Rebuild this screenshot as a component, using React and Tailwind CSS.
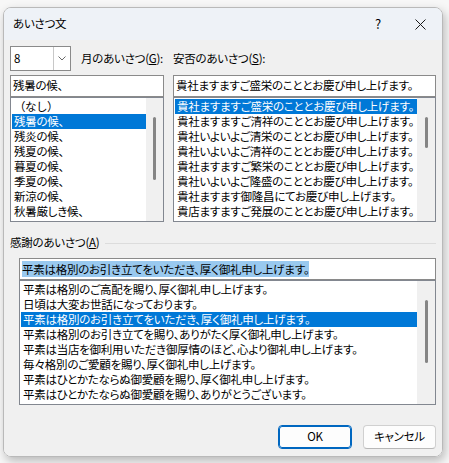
import React from 'react';

const monthItems = [
  <span className="[font-feature-settings:normal] tracking-[-0.5px]">（なし）</span>,
  '残暑の候、', '残炎の候、', '残夏の候、', '暮夏の候、', '季夏の候、', '新涼の候、', '秋暑厳しき候、',
];

const safetyItems = [
  '貴社ますますご盛栄のこととお慶び申し上げます。',
  '貴社ますますご清祥のこととお慶び申し上げます。',
  '貴社いよいよご清栄のこととお慶び申し上げます。',
  '貴社いよいよご清祥のこととお慶び申し上げます。',
  '貴社ますますご繁栄のこととお慶び申し上げます。',
  '貴社いよいよご隆盛のこととお慶び申し上げます。',
  '貴社ますます御隆昌にてお慶び申し上げます。',
  '貴店ますますご発展のこととお慶び申し上げます。',
];

const thanksItems = [
  '平素は格別のご高配を賜り、厚く御礼申し上げます。',
  '日頃は大変お世話になっております。',
  '平素は格別のお引き立てをいただき、厚く御礼申し上げます。',
  '平素は格別のお引き立てを賜り、ありがたく厚く御礼申し上げます。',
  '平素は当店を御利用いただき御厚情のほど、心より御礼申し上げます。',
  '毎々格別のご愛顧を賜り、厚く御礼申し上げます。',
  '平素はひとかたならぬ御愛顧を賜り、厚く御礼申し上げます。',
  '平素はひとかたならぬ御愛顧を賜り、ありがとうございます。',
];

// list box with a fake vertical scrollbar on the right
const ListBox = ({ items, selected, thumbH, trackW = 'w-[18px]' }) => (
  <div className="flex h-[125px] border border-[#828790] bg-white">
    <div className="flex-1 flex flex-col pt-[1px] pl-[1px] overflow-hidden">
      {items.map((item, i) => (
        <div
          key={i}
          className={`h-[15px] leading-[15px] pl-[2px] whitespace-nowrap ${i === selected ? 'bg-[#0078d7] text-white' : 'text-black'}`}
        >
          {item}
        </div>
      ))}
    </div>
    <div className={`${trackW} bg-[#f0f0f0] flex justify-center pt-[19px]`}>
      <div className={`w-[3px] ${thumbH} bg-[#858585] rounded-full`} />
    </div>
  </div>
);

const TextBox = ({ children }) => (
  <div className="h-[22px] border border-[#8a8a8a] bg-white flex items-center pl-[2px] whitespace-nowrap overflow-hidden">
    {children}
  </div>
);

export default function App() {
  return (
    <div className="w-[449px] h-[463px] bg-[#f7f7f7] pl-[3px] pt-[7px] font-['Noto_Sans_CJK_JP',sans-serif] text-[11.5px] tracking-[-0.25px] text-black [font-feature-settings:'palt']">
      <div className="w-[440px] h-[450px] rounded-[8px] border border-[#b9b9b9] overflow-hidden flex flex-col shadow-[2px_4px_10px_rgba(0,0,0,0.25)]">
        {/* title bar */}
        <div className="h-[32px] bg-[#eef2f7] flex items-center pl-[9px] pr-[16px]">
          <span className="flex-1">あいさつ文</span>
          <span className="text-[13px] mr-[34px]">?</span>
          <svg width="11" height="11" viewBox="0 0 11 11">
            <path d="M0.5 0.5 L10.5 10.5 M10.5 0.5 L0.5 10.5" stroke="#1a1a1a" strokeWidth="1" />
          </svg>
        </div>

        {/* body */}
        <div className="flex-1 bg-[#f0f0f0] pt-[6px] pl-[6px] pr-[6px] flex flex-col">
          <div className="flex items-center h-[25px]">
            <div className="w-[61px] h-[25px] border border-[#8a8a8a] bg-white flex">
              <div className="flex-1 flex items-center pl-[3px]">8</div>
              <div className="w-[17px] border-l border-[#c8c8c8] flex items-center justify-center">
                <svg width="8" height="5" viewBox="0 0 8 5">
                  <path d="M0.5 0.5 L4 4 L7.5 0.5" fill="none" stroke="#6a6a6a" strokeWidth="1" />
                </svg>
              </div>
            </div>
            <span className="ml-[10px] w-[92px] whitespace-nowrap">月のあいさつ(<span className="underline">G</span>):</span>
            <span className="whitespace-nowrap">安否のあいさつ(<span className="underline">S</span>):</span>
          </div>

          <div className="flex gap-[9px] mt-[4px]">
            <div className="w-[154px] flex flex-col">
              <TextBox>残暑の候、</TextBox>
              <ListBox items={monthItems} selected={1} thumbH="h-[63px]" trackW="w-[17px]" />
            </div>
            <div className="w-[263px] flex flex-col">
              <TextBox>貴社ますますご盛栄のこととお慶び申し上げます。</TextBox>
              <ListBox items={safetyItems} selected={0} thumbH="h-[31px]" />
            </div>
          </div>

          <div className="flex items-center mt-[14px] h-[14px]">
            <span>感謝のあいさつ(<span className="underline">A</span>)</span>
            <div className="flex-1 h-px bg-[#dcdcdc] ml-[6px]" />
          </div>

          <div className="ml-[9px] mt-[8px] w-[417px] flex flex-col">
            <TextBox>
              <span className="bg-[#99c9ef] leading-[16px]">平素は格別のお引き立てをいただき、厚く御礼申し上げます。</span>
            </TextBox>
            <ListBox items={thanksItems} selected={2} thumbH="h-[63px]" />
          </div>

          <div className="flex justify-end gap-[11px] mt-[20px]">
            <button className="w-[74px] h-[24px] rounded-[4px] border border-[#0067c0] bg-[#fdfdfd] outline outline-1 outline-[#0067c0] -outline-offset-2">OK</button>
            <button className="w-[73px] h-[24px] rounded-[4px] border border-[#d0d0d0] border-b-[#b8b8b8] bg-[#fdfdfd]">キャンセル</button>
          </div>
        </div>
      </div>
    </div>
  );
}
